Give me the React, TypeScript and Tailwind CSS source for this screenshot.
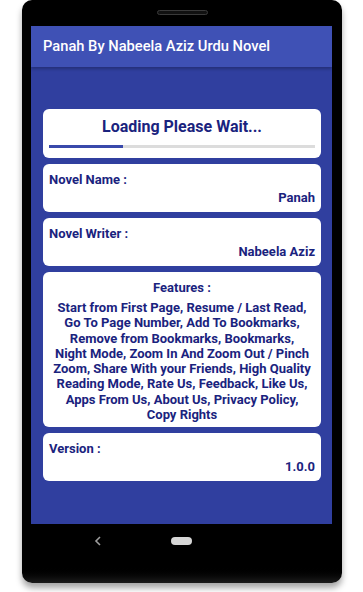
import React from 'react';

const InfoCard: React.FC<{ label: string; value: string }> = ({ label, value }) => (
    <div className="bg-white rounded-[6px] h-[48px] px-[6px] pt-[8px] flex flex-col">
        <span className="text-[13px] leading-[16px] font-bold text-[#1a237e]">{label}</span>
        <span className="text-[13px] leading-[16px] font-bold text-[#1a237e] text-right mt-[2px]">{value}</span>
    </div>
);

const featureLines = [
    'Start from First Page, Resume / Last Read,',
    'Go To Page Number, Add To Bookmarks,',
    'Remove from Bookmarks, Bookmarks,',
    'Night Mode, Zoom In And Zoom Out / Pinch',
    'Zoom, Share With your Friends, High Quality',
    'Reading Mode, Rate Us, Feedback, Like Us,',
    'Apps From Us, About Us, Privacy Policy,',
    'Copy Rights',
];

export default function App() {
    return (
        <div className="w-[363px] h-[592px] bg-white overflow-hidden font-['Roboto',sans-serif]">
            <div className="ml-[22px] w-[320px] h-[583px] rounded-[10px] flex flex-col shadow-[0_5px_6px_rgba(0,0,0,0.35)] bg-gradient-to-b from-black from-[97%] to-[#1c1c1c]">
                {/* earpiece */}
                <div className="h-[26px] flex justify-center pt-[10px]">
                    <div className="w-[51px] h-[5px] rounded-full bg-[#111] border border-[#3a3a3a]" />
                </div>

                <div className="ml-[9px] w-[301px] flex flex-col">
                    {/* app bar */}
                    <div className="h-[41px] bg-[#3f51b5] flex items-center px-[12px] shadow-[0_2px_3px_rgba(0,0,0,0.25)] relative z-10">
                        <span className="text-white text-[14.7px] font-medium">Panah By Nabeela Aziz Urdu Novel</span>
                    </div>

                    {/* body */}
                    <div className="h-[457px] bg-[#303f9f] pt-[42px] pl-[12px] pr-[11px] flex flex-col gap-[6px]">
                        <div className="bg-white rounded-[6px] h-[49px] px-[6px] pt-[8px] flex flex-col">
                            <span className="text-[16px] leading-[20px] font-bold text-[#1a237e] text-center">Loading Please Wait...</span>
                            <div className="mt-[8px] h-[3px] bg-[#dcdcdc] flex">
                                <div className="w-[74px] h-full bg-[#3949ab]" />
                            </div>
                        </div>

                        <InfoCard label="Novel Name :" value="Panah" />
                        <InfoCard label="Novel Writer :" value="Nabeela Aziz" />

                        <div className="bg-white rounded-[6px] h-[155px] px-[4px] pt-[8px] flex flex-col items-center">
                            <span className="text-[13px] leading-[16px] font-bold text-[#1a237e]">Features :</span>
                            <div className="mt-[4px] flex flex-col items-center">
                                {featureLines.map(line => (
                                    <span key={line} className="text-[13px] leading-[15.3px] font-bold text-[#1a237e] whitespace-nowrap">{line}</span>
                                ))}
                            </div>
                        </div>

                        <InfoCard label="Version :" value="1.0.0" />
                    </div>
                </div>

                {/* nav bar */}
                <div className="h-[46px] flex items-start pt-[13px] pl-[72px] gap-[69px]">
                    <svg width="8" height="10" viewBox="0 0 8 10" className="mt-[-1px]">
                        <path d="M6 1 L2 5 L6 9" stroke="#9e9e9e" strokeWidth="1.6" fill="none" />
                    </svg>
                    <div className="w-[21px] h-[8px] rounded-full bg-[#d6d6d6]" />
                </div>
            </div>
        </div>
    );
}
